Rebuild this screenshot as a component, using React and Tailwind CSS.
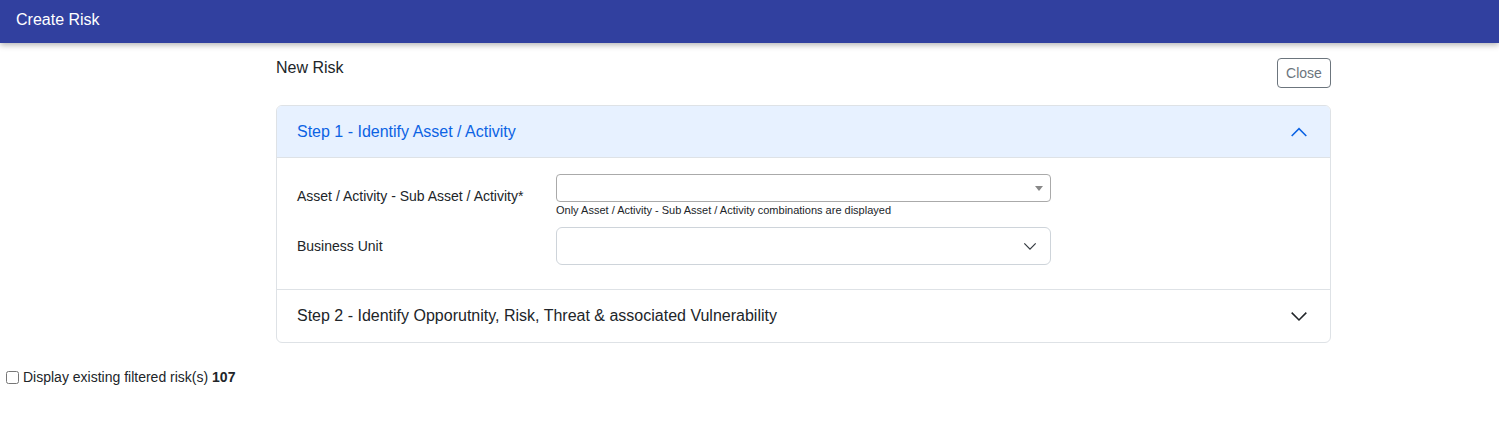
import React from "react";

const ChevronUp = ({ className }) => (
  <svg className={className} width="18" height="18" viewBox="0 0 16 16" fill="none">
    <path d="M1.5 11.5 8 5l6.5 6.5" stroke="currentColor" strokeWidth="1.4" />
  </svg>
);

const ChevronDown = ({ className, size = 18 }) => (
  <svg className={className} width={size} height={size} viewBox="0 0 16 16" fill="none">
    <path d="M1.5 5 8 11.5 14.5 5" stroke="currentColor" strokeWidth="1.4" />
  </svg>
);

const App = () => {
  return (
    <div className="min-h-[436px] bg-white text-[#212529]" style={{ fontFamily: '"Liberation Sans", Arial, sans-serif' }}>
      <header className="h-[43px] bg-[#31409f] px-4 pt-[8px] text-white text-base shadow-[0_2px_6px_rgba(0,0,0,0.3)]">
        Create Risk
      </header>

      <div className="ml-[276px] w-[1055px]">
        <div className="flex items-start justify-between pt-[13px]">
          <div className="text-base">New Risk</div>
          <button className="mt-[2px] h-[30px] w-[54px] rounded border border-[#6c757d] text-sm text-[#6c757d]">
            Close
          </button>
        </div>

        <div className="mt-[17px] rounded-[6px] border border-[#dee2e6] overflow-hidden">
          <div className="flex h-[52px] items-center justify-between bg-[#e7f1ff] px-5 text-base text-[#0c63e4] border-b border-[#dee2e6]">
            <span>Step 1 - Identify Asset / Activity</span>
            <ChevronUp className="mr-[2px]" />
          </div>

          <div className="px-5 pt-[16px] pb-[24px] border-b border-[#dee2e6]">
            <div className="flex">
              <div className="w-[259px] pt-[12px] text-sm">Asset / Activity - Sub Asset / Activity*</div>
              <div>
                <div className="flex h-[28px] w-[495px] items-center justify-end rounded-[4px] border border-[#aaa] pr-[7px]">
                  <span className="h-0 w-0 border-x-[4px] border-t-[5px] border-x-transparent border-t-[#888]" />
                </div>
                <div className="mt-[2px] text-[11px] leading-[13px]">Only Asset / Activity - Sub Asset / Activity combinations are displayed</div>
              </div>
            </div>
            <div className="mt-[10px] flex">
              <div className="w-[259px] pt-[9px] text-sm">Business Unit</div>
              <div className="flex h-[38px] w-[495px] items-center justify-end rounded-[6px] border border-[#ced4da] pr-[13px]">
                <ChevronDown size={14} className="text-[#343a40]" />
              </div>
            </div>
          </div>

          <div className="flex h-[52px] items-center justify-between px-5 text-base">
            <span>Step 2 - Identify Opporutnity, Risk, Threat &amp; associated Vulnerability</span>
            <ChevronDown className="mr-[2px]" />
          </div>
        </div>
      </div>

      <label className="mt-[24px] ml-[6px] flex items-center gap-[4px] text-sm">
        <input type="checkbox" className="h-[13px] w-[13px]" />
        <span>
          Display existing filtered risk(s) <b>107</b>
        </span>
      </label>
    </div>
  );
};

export default App;
